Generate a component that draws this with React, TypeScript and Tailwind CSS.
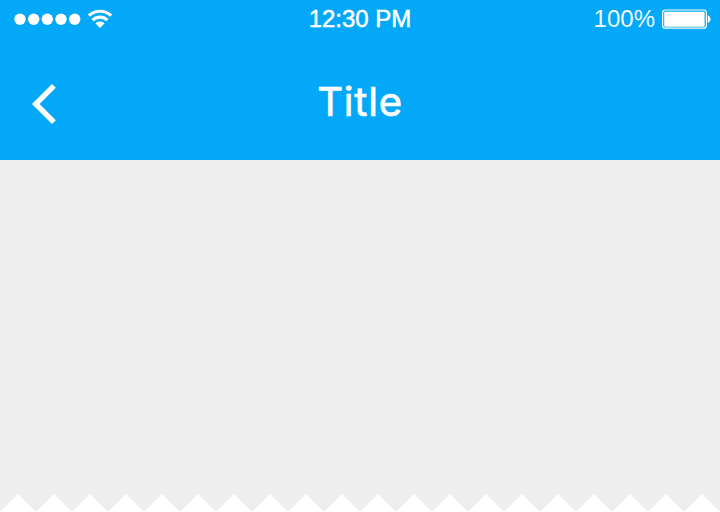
function WifiIcon() {
  return (
    <svg className="ml-[7px] h-[20px] w-[26px]" viewBox="87 9 26 20" fill="none" stroke="white">
      <path d="M88.9 15.6C95 9.8 105 9.8 111.1 15.6" strokeWidth="3.2" />
      <path d="M92.6 20.2C96.7 16.2 103.3 16.2 107.4 20.2" strokeWidth="3.2" />
      <path d="M95.4 23.3C98.1 20.9 101.9 20.9 104.6 23.3L100 28.1Z" fill="white" stroke="none" />
    </svg>
  );
}

function BatteryIcon() {
  return (
    <svg className="h-[20px] w-[50px]" viewBox="661 9 50 20">
      <rect x="662.6" y="10" width="43.8" height="18.2" rx="2.8" fill="none" stroke="white" strokeWidth="1.2" />
      <rect x="664.2" y="11.7" width="40.4" height="15" rx="1.2" fill="white" />
      <path d="M707.8 15.2C711.4 16.6 711.4 21.6 707.8 23Z" fill="white" />
    </svg>
  );
}

function StatusBar() {
  return (
    <div className="grid h-[40px] grid-cols-[240px_240px_240px] font-['Liberation_Sans',Arial,sans-serif] text-[24px] leading-[38px]">
      <div className="flex items-start pt-[9px] pl-[14px]">
        <svg className="h-[20px] w-[66px]" viewBox="14 9 66 20" fill="white" overflow="visible">
          {[20, 33.7, 47.3, 61, 74.7].map((x) => (
            <circle key={x} cx={x} cy="19.3" r="5.7" />
          ))}
        </svg>
        <WifiIcon />
      </div>
      <div className="text-center whitespace-nowrap [-webkit-text-stroke:0.5px_white]">12:30 PM</div>
      <div className="flex items-start justify-end pr-[9px]">
        <span className="mr-[6px] [-webkit-text-stroke:0.12px_#03a9f8]">100%</span>
        <div className="pt-[9px]">
          <BatteryIcon />
        </div>
      </div>
    </div>
  );
}

export default function App() {
  return (
    <div className="flex h-[512px] w-[720px] flex-col overflow-hidden bg-[#eeeeee] text-white">
      <header className="h-[160px] bg-[#03a9f8]">
        <StatusBar />
        <div className="grid h-[120px] grid-cols-[120px_480px_120px]">
          <button type="button" aria-label="Back" className="flex items-start pt-[43px] pl-[31px]">
            <svg className="h-[42px] w-[26px]" viewBox="31 83 26 42" fill="white">
              <path d="M52 84L55.8 87.8L39.6 104L55.8 120.2L52 124L32 104Z" />
            </svg>
          </button>
          <h1 className="pt-[38px] text-center font-['Inter',sans-serif] text-[40px] leading-[48px] font-normal tracking-[0.8px] [-webkit-text-stroke:0.7px_white]">
            Title
          </h1>
        </div>
      </header>
      <main className="flex-1" />
      <svg className="h-[18px] w-[720px]" viewBox="0 0 720 18" fill="white">
        {Array.from({ length: 20 }, (_, i) => (
          <path key={i} d={`M${i * 36} 18l18 -18l18 18Z`} />
        ))}
      </svg>
    </div>
  );
}
